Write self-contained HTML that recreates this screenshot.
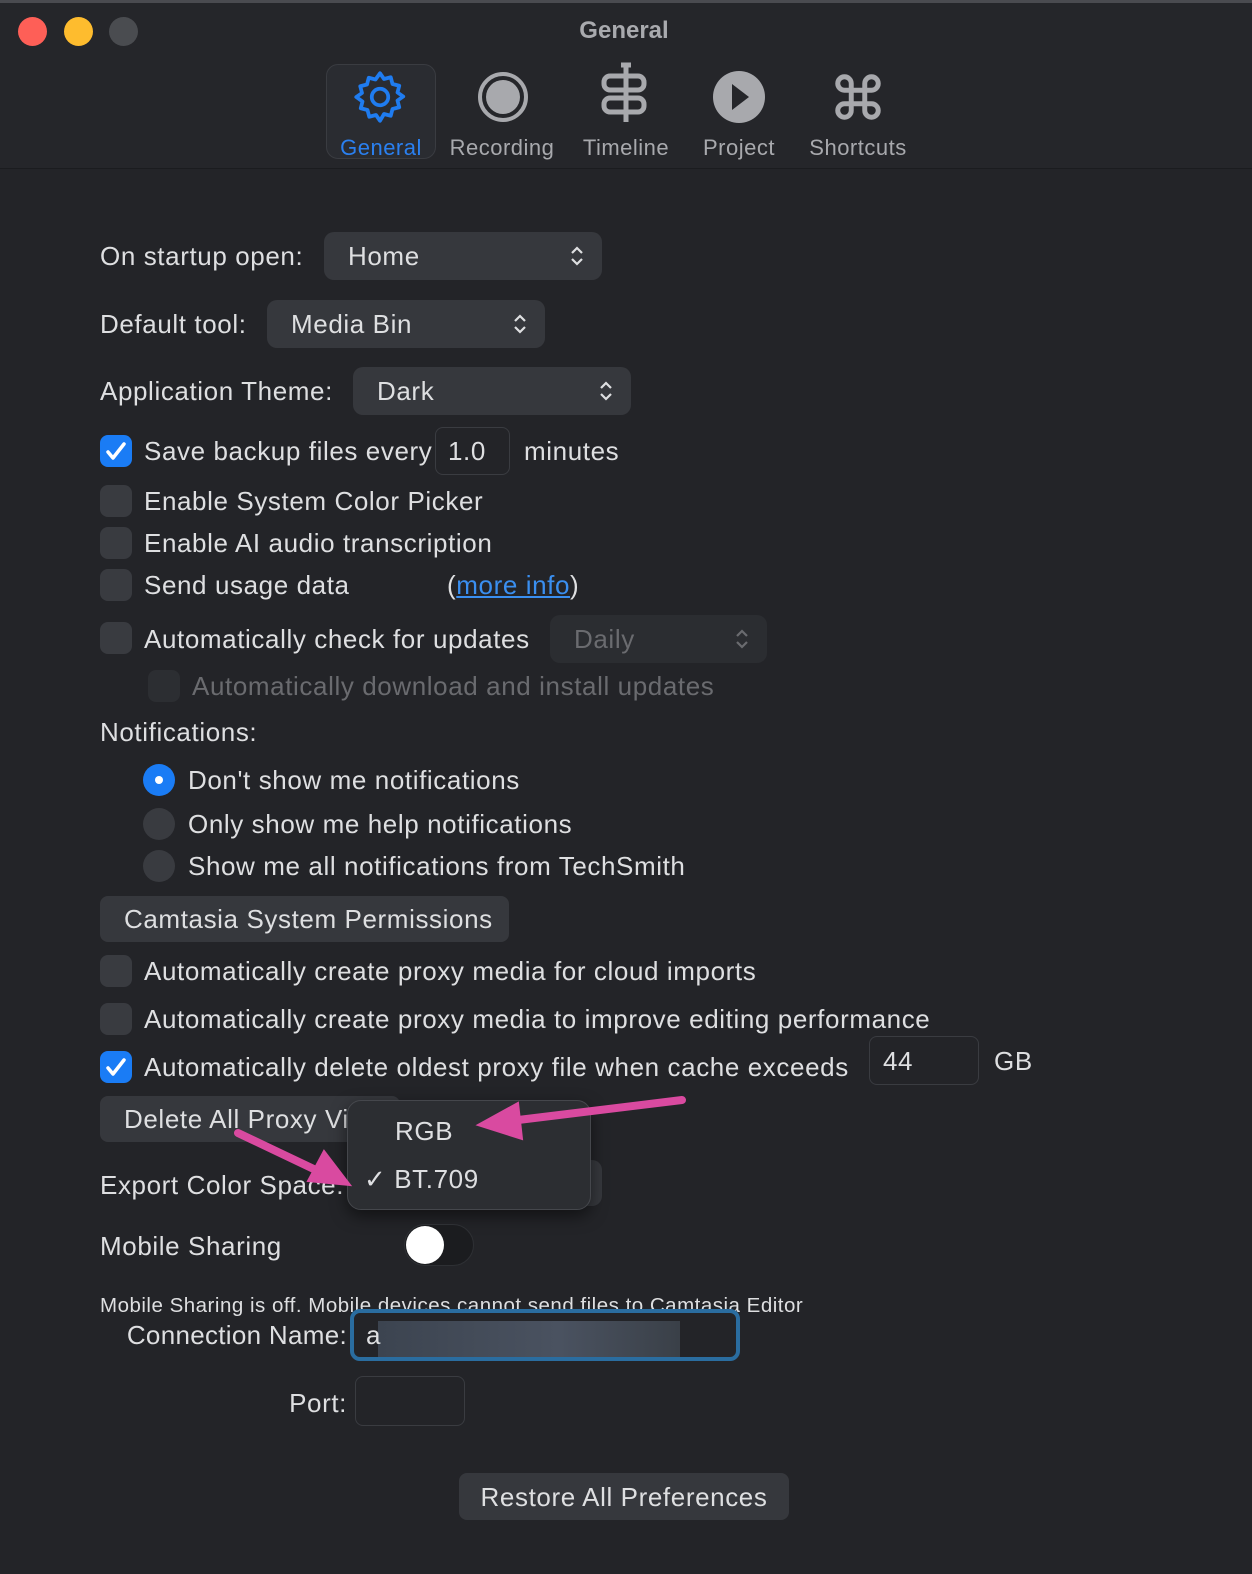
<!DOCTYPE html>
<html><head><meta charset="utf-8"><style>
*{margin:0;padding:0;box-sizing:border-box}
body{width:1252px;height:1574px;background:#232428;font-family:"Liberation Sans",sans-serif;color:#dedfe1;position:relative;overflow:hidden}
.a{position:absolute}
.t{position:absolute;font-size:26px;line-height:32px;white-space:nowrap;letter-spacing:0.6px}
.cb{position:absolute;width:32px;height:32px;border-radius:8px;background:#393b40}
.cb.on{background:#1a7cf5}
.sel{position:absolute;background:#36383d;border-radius:10px;height:48px}
.arr{position:absolute;right:18px;top:12px}
.btn{position:absolute;background:#36383d;border-radius:8px;height:46px}
.rd{position:absolute;width:32px;height:32px;border-radius:50%;background:#393b40}
.field{position:absolute;border:1px solid #3a3c41;border-radius:8px;background:#232428}
.tab{position:absolute;top:135px;font-size:22px;color:#a8a9ad;text-align:center;line-height:26px;letter-spacing:0.5px}
</style></head><body>
<div class="a" style="left:0;top:0;width:1252px;height:168px;background:#25262a"></div>
<div class="a" style="left:0;top:0;width:1252px;height:3px;background:#4a4b50"></div>
<div class="a" style="left:0;top:168px;width:1252px;height:1px;background:#1b1c1f"></div>
<div class="a" style="left:18px;top:17px;width:29px;height:29px;border-radius:50%;background:#fe5f57"></div>
<div class="a" style="left:64px;top:17px;width:29px;height:29px;border-radius:50%;background:#febc2e"></div>
<div class="a" style="left:109px;top:17px;width:29px;height:29px;border-radius:50%;background:#4a4c50"></div>
<div class="t" style="left:0;width:1248px;text-align:center;top:15px;font-weight:bold;color:#a9aaae;font-size:24px;letter-spacing:0">General</div>
<div class="a" style="left:326px;top:64px;width:110px;height:95px;border-radius:12px;background:#2a2c31;border:1px solid #3a3c41"></div>
<svg class="a" style="left:350px;top:67px" width="60" height="60" viewBox="0 0 24 24" fill="none" stroke="#1f7cf0" stroke-width="1.5"><path d="M12 2.5l1.6 2.3 2.7-.7.7 2.7 2.7.7-.7 2.7 2.3 1.6-2.3 1.6.7 2.7-2.7.7-.7 2.7-2.7-.7L12 21.5l-1.6-2.3-2.7.7-.7-2.7-2.7-.7.7-2.7L2.5 12l2.3-1.6-.7-2.7 2.7-.7.7-2.7 2.7.7z" stroke-linejoin="round"/><circle cx="12" cy="12" r="3.3"/></svg>
<div class="tab" style="left:326px;width:110px;color:#2a80f0">General</div>
<svg class="a" style="left:476px;top:70px" width="54" height="54" viewBox="0 0 54 54"><circle cx="27" cy="27" r="23" fill="none" stroke="#a8a9ad" stroke-width="4"/><circle cx="27" cy="27" r="17" fill="#a8a9ad"/></svg>
<div class="tab" style="left:436px;width:132px">Recording</div>
<svg class="a" style="left:596px;top:62px" width="60" height="62" viewBox="0 0 60 62" fill="none" stroke="#a8a9ad" stroke-width="5"><path d="M30 4v56"/><path d="M25 3h10"/><rect x="8" y="14" width="40" height="14" rx="6"/><rect x="8" y="36" width="40" height="14" rx="6"/><path d="M30 14v36" stroke="#25262a" stroke-width="0"/></svg>
<div class="tab" style="left:566px;width:120px">Timeline</div>
<svg class="a" style="left:712px;top:70px" width="54" height="54" viewBox="0 0 54 54"><circle cx="27" cy="27" r="26" fill="#a8a9ad"/><path d="M20 14l17 13-17 13z" fill="#25262a"/></svg>
<div class="tab" style="left:686px;width:106px">Project</div>
<svg class="a" style="left:830px;top:70px" width="56" height="54" viewBox="0 0 24 24" fill="none" stroke="#a8a9ad" stroke-width="2.2"><path d="M9 9V6a3 3 0 1 0-3 3h12a3 3 0 1 0-3-3v12a3 3 0 1 0 3-3H6a3 3 0 1 0 3 3z"/></svg>
<div class="tab" style="left:796px;width:124px">Shortcuts</div>

<div class="t" style="left:100px;top:240px">On startup open:</div>
<div class="sel" style="left:324px;top:232px;width:278px"><div class="t" style="left:24px;top:8px">Home</div><svg class="arr" width="14" height="24" viewBox="0 0 14 24" fill="none" stroke="#dedfe1" stroke-width="2.2"><path d="M2 9l5-5 5 5M2 15l5 5 5-5"/></svg></div>
<div class="t" style="left:100px;top:308px">Default tool:</div>
<div class="sel" style="left:267px;top:300px;width:278px"><div class="t" style="left:24px;top:8px">Media Bin</div><svg class="arr" width="14" height="24" viewBox="0 0 14 24" fill="none" stroke="#dedfe1" stroke-width="2.2"><path d="M2 9l5-5 5 5M2 15l5 5 5-5"/></svg></div>
<div class="t" style="left:100px;top:375px">Application Theme:</div>
<div class="sel" style="left:353px;top:367px;width:278px"><div class="t" style="left:24px;top:8px">Dark</div><svg class="arr" width="14" height="24" viewBox="0 0 14 24" fill="none" stroke="#dedfe1" stroke-width="2.2"><path d="M2 9l5-5 5 5M2 15l5 5 5-5"/></svg></div>

<div class="cb on" style="left:100px;top:435px"><svg width="32" height="32" viewBox="0 0 32 32" fill="none" stroke="#fff" stroke-width="3.5"><path d="M8 17l5 6 11-14" stroke-linecap="round" stroke-linejoin="round"/></svg></div>
<div class="t" style="left:144px;top:435px">Save backup files every</div>
<div class="field" style="left:435px;top:427px;width:75px;height:48px"></div>
<div class="t" style="left:448px;top:435px">1.0</div>
<div class="t" style="left:524px;top:435px">minutes</div>
<div class="cb" style="left:100px;top:485px"></div><div class="t" style="left:144px;top:485px">Enable System Color Picker</div>
<div class="cb" style="left:100px;top:527px"></div><div class="t" style="left:144px;top:527px">Enable AI audio transcription</div>
<div class="cb" style="left:100px;top:569px"></div><div class="t" style="left:144px;top:569px">Send usage data</div>
<div class="t" style="left:447px;top:569px">(<span style="color:#3a8ff0;text-decoration:underline">more info</span>)</div>
<div class="cb" style="left:100px;top:622px"></div><div class="t" style="left:144px;top:623px">Automatically check for updates</div>
<div class="sel" style="left:550px;top:615px;width:217px;background:#2b2d31"><div class="t" style="left:24px;top:8px;color:#6a6b6f">Daily</div><svg class="arr" width="14" height="24" viewBox="0 0 14 24" fill="none" stroke="#6a6b6f" stroke-width="2.2"><path d="M2 9l5-5 5 5M2 15l5 5 5-5"/></svg></div>
<div class="cb" style="left:148px;top:670px;background:#2c2e32"></div><div class="t" style="left:192px;top:670px;color:#6a6b6f">Automatically download and install updates</div>

<div class="t" style="left:100px;top:716px">Notifications:</div>
<div class="rd" style="left:143px;top:764px;background:#1a7cf5"><div class="a" style="left:12px;top:12px;width:8px;height:8px;border-radius:50%;background:#fff"></div></div>
<div class="t" style="left:188px;top:764px">Don't show me notifications</div>
<div class="rd" style="left:143px;top:808px"></div><div class="t" style="left:188px;top:808px">Only show me help notifications</div>
<div class="rd" style="left:143px;top:850px"></div><div class="t" style="left:188px;top:850px">Show me all notifications from TechSmith</div>
<div class="btn" style="left:100px;top:896px;width:409px"><div class="t" style="left:24px;top:7px">Camtasia System Permissions</div></div>

<div class="cb" style="left:100px;top:955px"></div><div class="t" style="left:144px;top:955px">Automatically create proxy media for cloud imports</div>
<div class="cb" style="left:100px;top:1003px"></div><div class="t" style="left:144px;top:1003px">Automatically create proxy media to improve editing performance</div>
<div class="cb on" style="left:100px;top:1051px"><svg width="32" height="32" viewBox="0 0 32 32" fill="none" stroke="#fff" stroke-width="3.5"><path d="M8 17l5 6 11-14" stroke-linecap="round" stroke-linejoin="round"/></svg></div>
<div class="t" style="left:144px;top:1051px">Automatically delete oldest proxy file when cache exceeds</div>
<div class="field" style="left:869px;top:1036px;width:110px;height:49px"></div>
<div class="t" style="left:883px;top:1045px">44</div>
<div class="t" style="left:994px;top:1045px">GB</div>
<div class="btn" style="left:100px;top:1096px;width:300px;overflow:hidden"><div class="t" style="left:24px;top:7px">Delete All Proxy Vid</div></div>
<div class="t" style="left:100px;top:1169px">Export Color Space:</div>
<div class="sel" style="left:350px;top:1160px;width:252px;height:46px"></div>
<div class="a" style="left:347px;top:1100px;width:244px;height:110px;border-radius:14px;background:#2c2e32;border:1px solid #45474c;box-shadow:0 6px 16px rgba(0,0,0,.5)"></div>
<div class="t" style="left:395px;top:1115px">RGB</div>
<div class="t" style="left:364px;top:1163px">✓ BT.709</div>
<svg class="a" style="left:0;top:0" width="1252" height="1574"><g stroke="#d94aa0" stroke-width="8" stroke-linecap="round" fill="#d94aa0"><path d="M682 1100L510 1121"/><path d="M478 1125l40-22 4 36z" stroke-width="2"/><path d="M238 1133L320 1172"/><path d="M350 1185l-42-4 16-30z" stroke-width="2"/></g></svg>

<div class="t" style="left:100px;top:1230px">Mobile Sharing</div>
<div class="a" style="left:404px;top:1224px;width:70px;height:42px;border-radius:21px;background:#1b1c1f;border:1px solid #2e3034"></div>
<div class="a" style="left:406px;top:1226px;width:38px;height:38px;border-radius:50%;background:#fff"></div>
<div class="t" style="left:100px;top:1290px;font-size:20.5px;letter-spacing:0.5px">Mobile Sharing is off. Mobile devices cannot send files to Camtasia Editor</div>
<div class="a" style="left:350px;top:1309px;width:390px;height:52px;border-radius:10px;border:4px solid #2a6da0;background:#232428"></div>
<div class="a" style="left:378px;top:1321px;width:302px;height:36px;background:linear-gradient(90deg,#3c4450,#4a5260 60%,#3a4048)"></div>
<div class="t" style="left:366px;top:1319px">a</div>
<div class="t" style="left:0;width:347px;text-align:right;top:1319px;letter-spacing:0.3px">Connection Name:</div>
<div class="t" style="left:0;width:347px;text-align:right;top:1387px">Port:</div>
<div class="field" style="left:355px;top:1376px;width:110px;height:50px"></div>
<div class="btn" style="left:459px;top:1473px;width:330px;height:47px"><div class="t" style="left:0;width:330px;text-align:center;top:8px">Restore All Preferences</div></div>
</body></html>
